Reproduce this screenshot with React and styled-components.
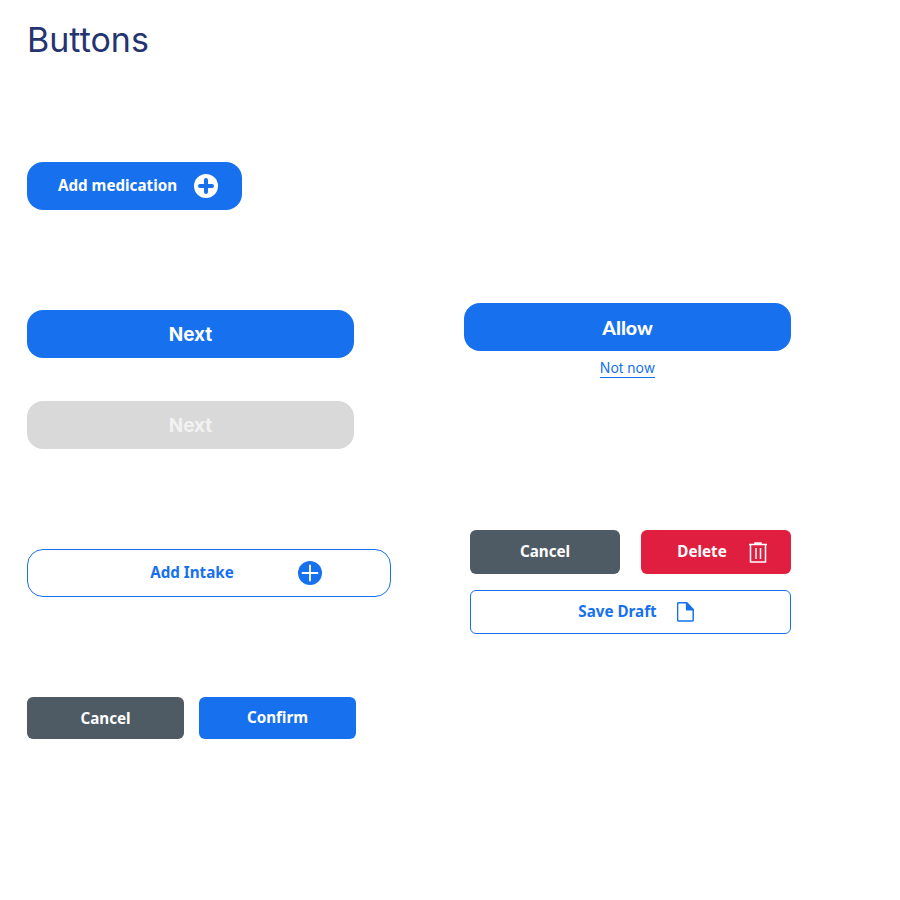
import styled, { createGlobalStyle } from "styled-components";

const GlobalStyle = createGlobalStyle`
  html, body {
    margin: 0;
    padding: 0;
    background: #ffffff;
  }
  body {
    font-family: "Inter", "Liberation Sans", sans-serif;
  }
`;

const BLUE = "#1771ee";
const SLATE = "#4f5b64";
const RED = "#e01f40";

const Page = styled.div`
  width: 900px;
  height: 900px;
  box-sizing: border-box;
  padding: 21px 0 0 27px;
`;

const Title = styled.h1`
  margin: 0;
  height: 38px;
  font-size: 34px;
  line-height: 38px;
  font-weight: 400;
  color: #25346f;
`;

const Columns = styled.div`
  display: flex;
  margin-top: 103px;
`;

const LeftColumn = styled.div`
  width: 437px;
  display: flex;
  flex-direction: column;
`;

const RightColumn = styled.div`
  width: 327px;
  display: flex;
  flex-direction: column;
  padding-top: 141px;
`;

const Button = styled.button`
  display: flex;
  align-items: center;
  justify-content: center;
  box-sizing: border-box;
  margin: 0;
  padding: ${(p) => p.$padding || "0"};
  width: ${(p) => p.$width}px;
  height: ${(p) => p.$height}px;
  gap: ${(p) => p.$gap || 0}px;
  border: ${(p) => (p.$outline ? `1px solid ${BLUE}` : "none")};
  border-radius: ${(p) => p.$radius}px;
  background: ${(p) => (p.$outline ? "#ffffff" : p.$color || BLUE)};
  color: ${(p) => (p.$outline ? BLUE : p.$textColor || "#ffffff")};
  font-family: ${(p) => p.$font || '"Noto Sans"'}, "Liberation Sans", sans-serif;
  font-size: ${(p) => p.$size || 15.2}px;
  font-weight: ${(p) => p.$weight || 700};
  white-space: nowrap;
`;

const Label = styled.span`
  display: block;
  position: relative;
  top: ${(p) => p.$lift || 0}px;
`;

const IconSlot = styled.svg`
  display: block;
  flex: none;
`;

const MedicationRow = styled.div`
  margin-bottom: 100px;
`;

const NextStack = styled.div`
  display: flex;
  flex-direction: column;
  gap: 43px;
  margin-bottom: 100px;
`;

const PairRow = styled.div`
  display: flex;
  gap: ${(p) => p.$gap}px;
  margin-top: ${(p) => p.$top || 0}px;
`;

const NotNow = styled.a`
  align-self: center;
  margin-top: 8px;
  padding-bottom: 1px;
  color: ${BLUE};
  font-family: "Inter", "Liberation Sans", sans-serif;
  font-size: 14px;
  line-height: 17px;
  border-bottom: 1px solid ${BLUE};
`;

const ActionGroup = styled.div`
  display: flex;
  flex-direction: column;
  gap: 16px;
  width: 321px;
  margin: 152px 0 0 6px;
`;

const PlusBold = () => (
  <IconSlot width="24" height="24" viewBox="0 0 24 24">
    <circle cx="12" cy="12" r="12" fill="#ffffff" />
    <path d="M12 6v12M6 12h12" stroke={BLUE} strokeWidth="4" strokeLinecap="round" />
  </IconSlot>
);

const PlusFilled = () => (
  <IconSlot width="24" height="24" viewBox="0 0 24 24">
    <circle cx="12" cy="12" r="12" fill={BLUE} />
    <path d="M12 4.5v15M4.5 12h15" stroke="#ffffff" strokeWidth="1.8" strokeLinecap="round" />
  </IconSlot>
);

const TrashIcon = () => (
  <IconSlot width="18" height="21" viewBox="0 0 18 21" fill="none" stroke="#ffffff" strokeWidth="1.5">
    <path d="M0 2.5h18M6 2.500V1h6v1.500" />
    <path d="M1.500 2.500v17.500h15V2.500" />
    <path d="M7 6v11M11.500 6v11" />
  </IconSlot>
);

const FileIcon = () => (
  <IconSlot width="17" height="20" viewBox="0 0 17 20" fill="none" stroke={BLUE} strokeWidth="1.5" strokeLinejoin="round">
    <path d="M1.800.8h7.800l6.600 7v10.100a1.200 1.200 0 0 1-1.200 1.200H1.800A1.200 1.200 0 0 1 .6 17.900V2A1.200 1.200 0 0 1 1.800.800z" />
    <path d="M9.600.8l6.600 7h-6.600z" fill={BLUE} />
  </IconSlot>
);

export default function App() {
  return (
    <Page>
      <GlobalStyle />
      <Title>Buttons</Title>
      <Columns>
        <LeftColumn>
          <MedicationRow>
            <Button $width={215} $height={48} $radius={16} $gap={17} $padding="0 0 0 7px">
              <Label $lift={-1}>Add medication</Label>
              <PlusBold />
            </Button>
          </MedicationRow>
          <NextStack>
            <Button $width={327} $height={48} $radius={16} $font="Inter" $size={19} $weight={700}>
              <Label>Next</Label>
            </Button>
            <Button $width={327} $height={48} $radius={16} $font="Inter" $size={19} $weight={700} $color="#d9d9d9" $textColor="#f2f2f2">
              <Label>Next</Label>
            </Button>
          </NextStack>
          <Button $width={364} $height={48} $radius={16} $outline $gap={64} $padding="0 0 0 54px">
            <Label $lift={-1}>Add Intake</Label>
            <PlusFilled />
          </Button>
          <PairRow $gap={15} $top={100}>
            <Button $width={157} $height={42} $radius={6} $color={SLATE}>
              <Label>Cancel</Label>
            </Button>
            <Button $width={157} $height={42} $radius={6}>
              <Label $lift={-1}>Confirm</Label>
            </Button>
          </PairRow>
        </LeftColumn>
        <RightColumn>
          <Button $width={327} $height={48} $radius={16} $font="Lato" $size={19.5} $weight={900}>
            <Label>Allow</Label>
          </Button>
          <NotNow>Not now</NotNow>
          <ActionGroup>
            <PairRow $gap={21}>
              <Button $width={150} $height={44} $radius={6} $color={SLATE}>
                <Label $lift={-1}>Cancel</Label>
              </Button>
              <Button $width={150} $height={44} $radius={6} $color={RED} $gap={22} $padding="0 0 0 12px">
                <Label $lift={-1}>Delete</Label>
                <TrashIcon />
              </Button>
            </PairRow>
            <Button $width={321} $height={44} $radius={6} $outline $gap={20} $padding="0 0 0 11px">
              <Label $lift={-1}>Save Draft</Label>
              <FileIcon />
            </Button>
          </ActionGroup>
        </RightColumn>
      </Columns>
    </Page>
  );
}
